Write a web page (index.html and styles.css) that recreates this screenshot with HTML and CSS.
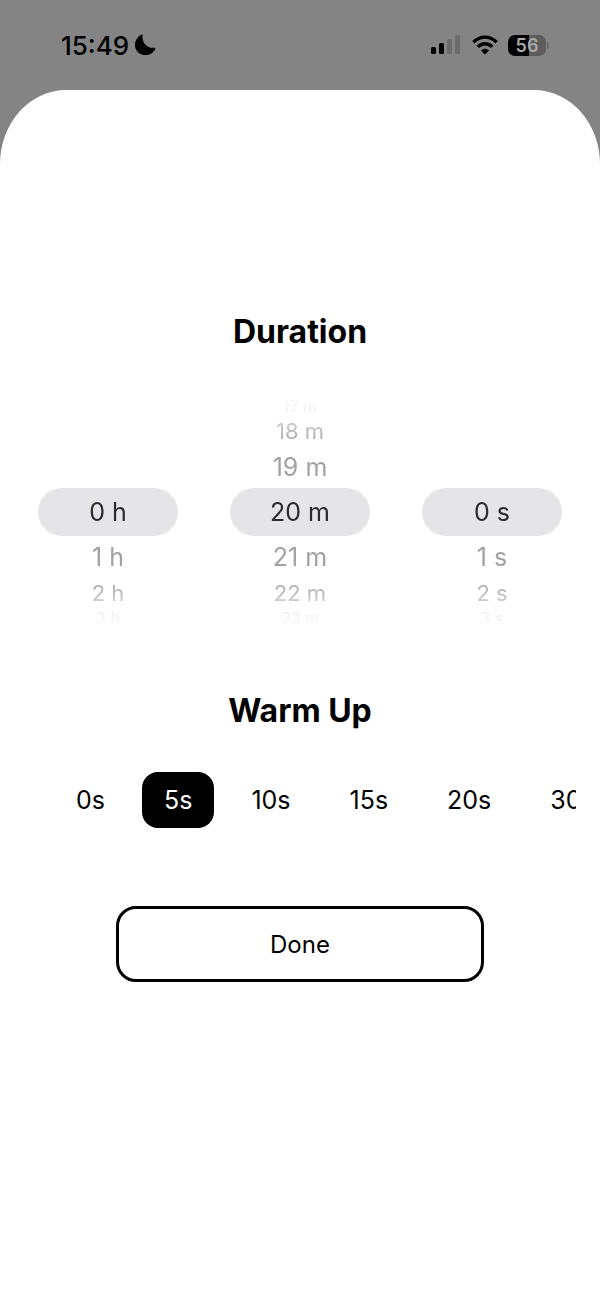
FILE: index.html
```html
<!DOCTYPE html>
<html lang="en">
<head>
    <meta charset="UTF-8">
    <meta name="viewport" content="width=device-width, initial-scale=1.0">
    <title>Timer</title>
    <link rel="stylesheet" href="styles.css">
</head>
<body>
    <header class="status-bar">
        <div class="status-time">
            <span>15:49</span>
            <svg class="moon" viewBox="0 0 22 22" width="22" height="22" aria-hidden="true">
                <path d="M8.6 0.9C7.7 7.9 12 14.6 20.6 13.8C21.3 13.7 21.5 14.3 21.2 14.9C19.4 18.8 15.7 21 11.4 21C5.4 21 1 16.8 1 10.9C1 6.6 3.5 2.6 7.3 0.7C8 0.3 8.6 0.4 8.6 0.9Z"/>
            </svg>
        </div>
        <div class="status-icons">
            <svg viewBox="0 0 32 20" width="32" height="20" aria-hidden="true">
                <rect x="1" y="12" width="5" height="7" rx="1.5"/>
                <rect x="9" y="8" width="5" height="11" rx="1.5"/>
                <rect class="dim" x="17" y="4" width="5" height="15" rx="1.5"/>
                <rect class="dim" x="25" y="0" width="5" height="19" rx="1.5"/>
            </svg>
            <svg viewBox="0 0 26 20" width="26" height="20" aria-hidden="true">
                <path class="wave" d="M1.4 7.2C8 0.4 18 0.4 24.6 7.2"/>
                <path class="wave" d="M5.8 11.9C10 7.7 16 7.7 20.2 11.9"/>
                <path d="M9 15.4C11.3 13.2 14.7 13.2 17 15.4L13.7 18.9Q13 19.5 12.3 18.9Z"/>
            </svg>
            <div class="battery">
                <span class="battery-level">56</span>
                <span class="battery-tip"></span>
            </div>
        </div>
    </header>

    <main class="sheet">
        <h1 class="title">Duration</h1>
        <div class="wheels">
            <div class="wheel" role="listbox" aria-label="Hours">
                <button class="value selected" role="option" aria-selected="true">0 h</button>
                <button class="value below-1" role="option">1 h</button>
                <button class="value below-2" role="option">2 h</button>
                <button class="value below-3" role="option">3 h</button>
            </div>
            <div class="wheel" role="listbox" aria-label="Minutes">
                <button class="value above-3" role="option">17 m</button>
                <button class="value above-2" role="option">18 m</button>
                <button class="value above-1" role="option">19 m</button>
                <button class="value selected" role="option" aria-selected="true">20 m</button>
                <button class="value below-1" role="option">21 m</button>
                <button class="value below-2" role="option">22 m</button>
                <button class="value below-3" role="option">23 m</button>
            </div>
            <div class="wheel" role="listbox" aria-label="Seconds">
                <button class="value selected" role="option" aria-selected="true">0 s</button>
                <button class="value below-1" role="option">1 s</button>
                <button class="value below-2" role="option">2 s</button>
                <button class="value below-3" role="option">3 s</button>
            </div>
        </div>

        <h2 class="title">Warm Up</h2>
        <div class="warmup">
            <button class="chip">0s</button>
            <button class="chip active">5s</button>
            <button class="chip">10s</button>
            <button class="chip">15s</button>
            <button class="chip">20s</button>
            <button class="chip">30s</button>
        </div>

        <button class="done">Done</button>
    </main>

    <script>
        // only one warm up time can be picked
        const chips = document.querySelectorAll('.chip');
        chips.forEach(chip => {
            chip.addEventListener('click', () => {
                chips.forEach(c => c.classList.remove('active'));
                chip.classList.add('active');
            });
        });
    </script>
</body>
</html>
```
FILE: styles.css
```css
* {
    box-sizing: border-box;
}

body {
    margin: 0;
    min-height: 100vh;
    display: flex;
    flex-direction: column;
    background: #848484;
    color: #000;
    font-family: Inter, "Liberation Sans", sans-serif;
}

button {
    padding: 0;
    border: none;
    background: none;
    color: inherit;
    font-family: inherit;
    font-size: 25px;
    cursor: pointer;
}

/* status bar */
.status-bar {
    display: flex;
    justify-content: space-between;
    align-items: center;
    height: 90px;
    padding: 0 51px 0 61px;
}

.status-time {
    display: flex;
    align-items: center;
    gap: 5px;
    font-size: 26px;
    font-weight: 500;
}

.status-icons {
    display: flex;
    align-items: center;
    gap: 10px;
}

.dim {
    fill: #6b6b6b;
}

.wave {
    fill: none;
    stroke: #000;
    stroke-width: 3.4;
}

.battery {
    display: flex;
    align-items: center;
    gap: 1px;
}

.battery-level {
    width: 38px;
    border-radius: 7px;
    background: linear-gradient(to right, #000 56%, #5c5c5c 56%);
    color: #aaa;
    font-size: 18px;
    font-weight: 600;
    line-height: 21px;
    text-align: center;
}

.battery-tip {
    width: 2px;
    height: 7px;
    border-radius: 0 2px 2px 0;
    background: #6b6b6b;
}

/* sheet */
.sheet {
    flex: 1;
    padding: 222px 0 60px;
    border-radius: 66px 66px 0 0 / 74px 74px 0 0;
    background: #fff;
}

.title {
    margin: 0;
    font-size: 32px;
    font-weight: 700;
    line-height: 40px;
    text-align: center;
}

/* wheels */
.wheels {
    display: grid;
    grid-template-columns: repeat(3, 1fr);
    gap: 52px;
    margin: 44px 0 63px;
    padding: 0 38px;
}

.wheel {
    display: grid;
    grid-template-rows: 20px 30px 42px 48px 42px 30px 20px;
    -webkit-mask-image: linear-gradient(transparent, #000 40px, #000 192px, transparent);
    mask-image: linear-gradient(transparent, #000 40px, #000 192px, transparent);
}

.value {
    color: #a2a2a2;
}

.selected {
    grid-row: 4;
    border-radius: 24px;
    background: #e5e5e8;
    color: #2c2c2e;
}

.above-1 {
    grid-row: 3;
}

.below-1 {
    grid-row: 5;
}

.above-2,
.below-2 {
    grid-row: 2;
    color: #b4b4b4;
    font-size: 22px;
    line-height: 30px;
}

.below-2 {
    grid-row: 6;
}

.above-3,
.below-3 {
    grid-row: 1;
    color: #d0d0d0;
    font-size: 16px;
    line-height: 20px;
}

.below-3 {
    grid-row: 7;
}

/* warm up */
.warmup {
    display: flex;
    gap: 15px;
    margin: 41px 24px 78px;
    padding-left: 30px;
    overflow-x: auto;
    scrollbar-width: none;
}

.chip {
    flex: none;
    height: 56px;
    padding: 0 22px;
    border-radius: 16px;
}

.chip.active {
    background: #000;
    color: #fff;
}

.done {
    display: block;
    width: calc(100% - 232px);
    height: 76px;
    margin: 0 auto;
    border: 3px solid #000;
    border-radius: 20px;
    font-size: 24px;
}
```
